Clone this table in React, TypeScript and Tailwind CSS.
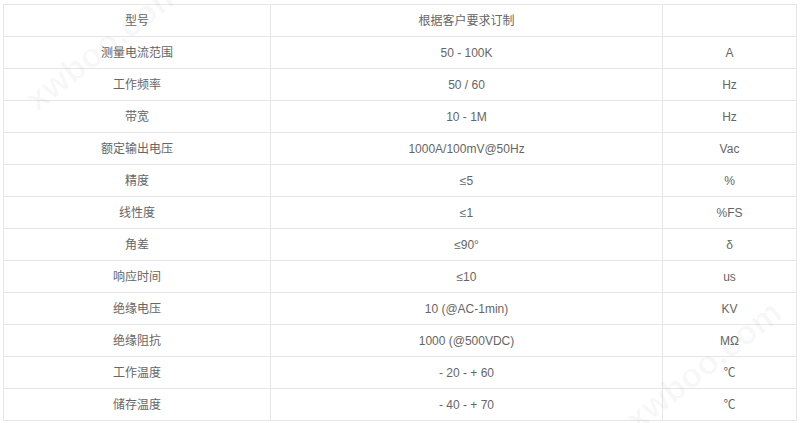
const rows: [string, string, string][] = [
  ["型号", "根据客户要求订制", ""],
  ["测量电流范围", "50 - 100K", "A"],
  ["工作频率", "50 / 60", "Hz"],
  ["带宽", "10 - 1M", "Hz"],
  ["额定输出电压", "1000A/100mV@50Hz", "Vac"],
  ["精度", "≤5", "%"],
  ["线性度", "≤1", "%FS"],
  ["角差", "≤90°", "δ"],
  ["响应时间", "≤10", "us"],
  ["绝缘电压", "10 (@AC-1min)", "KV"],
  ["绝缘阻抗", "1000 (@500VDC)", "MΩ"],
  ["工作温度", "- 20 - + 60", "℃"],
  ["储存温度", "- 40 - + 70", "℃"],
];

export default function App() {
  return (
    <main
      className="relative w-[800px] h-[423px] overflow-hidden bg-white pl-[3px] pt-[4px]"
      style={{ fontFamily: '"Liberation Sans", "Noto Sans CJK SC", sans-serif' }}
    >
      <table className="w-[793px] border-collapse text-[12px] text-[#666] table-fixed">
        <colgroup>
          <col className="w-[267px]" />
          <col className="w-[392px]" />
          <col className="w-[134px]" />
        </colgroup>
        <tbody>
          {rows.map(([name, value, unit]) => (
            <tr key={name} className="h-[32px]">
              <td className="border border-[#e6e6e6] text-center">{name}</td>
              <td className="border border-[#e6e6e6] text-center">{value}</td>
              <td className="border border-[#e6e6e6] text-center">{unit}</td>
            </tr>
          ))}
        </tbody>
      </table>

      {/* watermarks */}
      <div className="pointer-events-none absolute left-[10px] top-[20px] -rotate-[38deg] text-[34px] font-bold text-[#000]/[0.03]">
        xwboo.com
      </div>
      <div className="pointer-events-none absolute left-[610px] top-[340px] -rotate-[38deg] text-[34px] font-bold text-[#000]/[0.03]">
        xwboo.com
      </div>
    </main>
  );
}
